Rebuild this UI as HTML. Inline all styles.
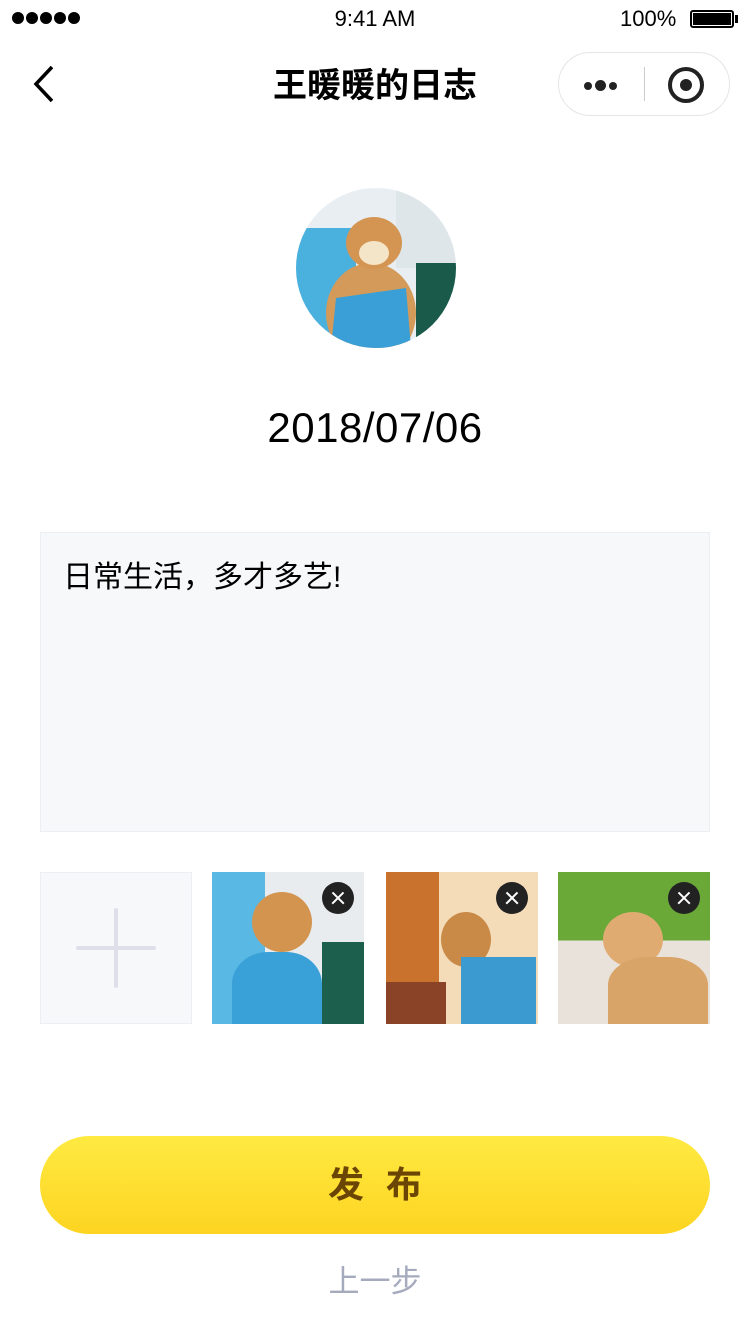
<!DOCTYPE html>
<html><head><meta charset="utf-8"><style>
*{margin:0;padding:0;box-sizing:border-box}
body{width:750px;height:1334px;background:#fff;position:relative;overflow:hidden;font-family:"Liberation Sans","Noto Sans CJK SC",sans-serif;color:#000}
.abs{position:absolute}
.thumb{position:absolute;top:872px;width:152px;height:152px;overflow:hidden}
.x{position:absolute;top:10px;right:10px;width:32px;height:32px;border-radius:50%;background:#222}
.x:before,.x:after{content:"";position:absolute;left:8px;top:15px;width:16px;height:2.4px;background:#fff;transform:rotate(45deg)}
.x:after{transform:rotate(-45deg)}
.d{width:12px;height:12px;border-radius:50%;background:#000;display:block}
</style></head><body>
<div class="abs" style="left:12px;top:12px;display:flex;gap:2px">
<i class="d"></i><i class="d"></i><i class="d"></i><i class="d"></i><i class="d"></i></div>
<div class="abs" style="left:0;width:750px;top:6px;text-align:center;font-size:22px">9:41 AM</div>
<div class="abs" style="left:620px;top:6px;font-size:22px">100%</div>
<div class="abs" style="left:690px;top:10px;width:44px;height:18px;border:2px solid #000;border-radius:3px;padding:1px"><div style="background:#000;width:100%;height:100%"></div></div>
<div class="abs" style="left:735px;top:15px;width:3px;height:8px;background:#000"></div>
<svg class="abs" style="left:30px;top:64px" width="30" height="40"><path d="M22 3 L6 20 L22 37" fill="none" stroke="#000" stroke-width="3.5"/></svg>
<div class="abs" style="left:0;width:750px;top:58px;text-align:center;font-size:34px;font-weight:bold">王暖暖的日志</div>
<div class="abs" style="left:558px;top:52px;width:172px;height:64px;border:1.5px solid #e5e5e5;border-radius:32px"></div>
<div class="abs" style="left:584px;top:80px;display:flex;gap:3px;align-items:center"><i style="width:8px;height:8px;border-radius:50%;background:#222;display:block"></i><i style="width:11px;height:11px;border-radius:50%;background:#222;display:block"></i><i style="width:8px;height:8px;border-radius:50%;background:#222;display:block"></i></div>
<div class="abs" style="left:644px;top:67px;width:1px;height:34px;background:#ccc"></div>
<div class="abs" style="left:668px;top:67px;width:36px;height:36px;border:4px solid #222;border-radius:50%"></div>
<div class="abs" style="left:680px;top:79px;width:12px;height:12px;background:#222;border-radius:50%"></div>
<svg class="abs" style="left:296px;top:188px" width="160" height="160" viewBox="0 0 160 160">
<defs><clipPath id="c"><circle cx="80" cy="80" r="80"/></clipPath></defs>
<g clip-path="url(#c)">
<rect width="160" height="160" fill="#e8eef2"/>
<rect x="0" y="40" width="60" height="120" fill="#4ab0de"/>
<rect x="100" y="0" width="60" height="80" fill="#dfe6ea"/>
<rect x="120" y="75" width="45" height="90" fill="#1a5a4a"/>
<ellipse cx="75" cy="125" rx="45" ry="50" fill="#d49a5a"/>
<ellipse cx="78" cy="55" rx="28" ry="26" fill="#d49452"/>
<ellipse cx="78" cy="65" rx="15" ry="12" fill="#f4e4c8"/>
<path d="M40 110 L110 100 L115 160 L35 160Z" fill="#3a9fd6"/>
</g></svg>
<div class="abs" style="left:0;width:750px;top:404px;text-align:center;font-size:42px;letter-spacing:0.5px">2018/07/06</div>
<div class="abs" style="left:40px;top:532px;width:670px;height:300px;background:#f7f8fa;border:1px solid #eceef2"></div>
<div class="abs" style="left:63px;top:552px;font-size:30px">日常生活，多才多艺!</div>
<div class="thumb" style="left:40px;width:152px;background:#f7f8fa;border:1px solid #eceef2">
<div class="abs" style="left:35px;top:73px;width:80px;height:4px;background:#dde0e9;border-radius:2px"></div>
<div class="abs" style="left:73px;top:35px;width:4px;height:80px;background:#dde0e9;border-radius:2px"></div></div>
<div class="thumb" style="left:212px;background:linear-gradient(90deg,#5ab8e4 0 35%,#e8ecef 35%)">
<div class="abs" style="left:110px;top:70px;width:50px;height:90px;background:#1b5f4c"></div>
<div class="abs" style="left:40px;top:20px;width:60px;height:60px;border-radius:50%;background:#d39450"></div>
<div class="abs" style="left:20px;top:80px;width:90px;height:80px;border-radius:40% 40% 0 0;background:#3aa0d8"></div>
<div class="x"></div></div>
<div class="thumb" style="left:386px;background:linear-gradient(90deg,#c8722e 0 35%,#f4dcb8 35%)">
<div class="abs" style="left:0;top:110px;width:60px;height:42px;background:#8a4326"></div>
<div class="abs" style="left:55px;top:40px;width:50px;height:55px;border-radius:50%;background:#c98a48"></div>
<div class="abs" style="left:75px;top:85px;width:75px;height:70px;background:#3b9bd0"></div>
<div class="x"></div></div>
<div class="thumb" style="left:558px;background:linear-gradient(180deg,#6aa838 0 45%,#e9e2da 45%)">
<div class="abs" style="left:45px;top:40px;width:60px;height:55px;border-radius:50%;background:#e0ab70"></div>
<div class="abs" style="left:50px;top:85px;width:100px;height:70px;border-radius:40% 40% 0 0;background:#d9a468"></div>
<div class="x"></div></div>
<div class="abs" style="left:40px;top:1136px;width:670px;height:98px;border-radius:49px;background:linear-gradient(180deg,#ffea42,#fdd421);text-align:center;line-height:98px;font-size:36px;font-weight:bold;color:#6b4504;letter-spacing:22px;padding-left:22px">发布</div>
<div class="abs" style="left:0;width:750px;top:1256px;text-align:center;font-size:31px;color:#a5abbd">上一步</div>
</body></html>
